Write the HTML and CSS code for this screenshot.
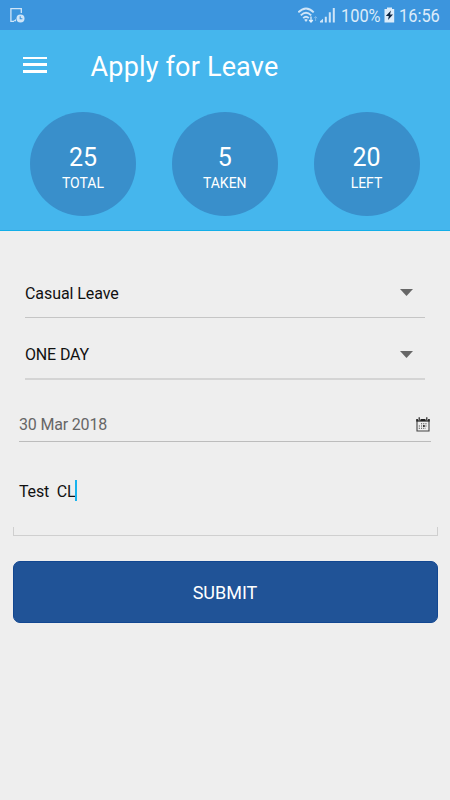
FILE: index.html
```html
<!DOCTYPE html>
<html lang="en">
<head>
<meta charset="utf-8">
<title>Apply for Leave</title>
<link rel="stylesheet" href="styles.css">
</head>
<body>
<div class="status">
  <svg class="notice" width="16" height="16" viewBox="0 0 16 16"><path d="M5 14.3H1.9V1.6H12.3V6" fill="none" stroke="#cfe5f8" stroke-width="1.3"/><circle cx="11.5" cy="11.6" r="4" fill="#cfe5f8"/><path d="M11.2 9.2v2.6h2.2" fill="none" stroke="#3c95dd" stroke-width="1.1"/><path d="M4 14.3 7 12V14.3z" fill="#cfe5f8"/></svg>
  <svg class="wifi" width="20" height="17" viewBox="0 0 20 17"><g fill="none" stroke="#cfe5f8" stroke-width="1.9"><path d="M.3 5.3Q8-2.4 15.7 5.3"/><path d="M2.8 8.4Q8 3.2 13.2 8.4"/><path d="M5.2 11.2Q8 8.4 10.8 11.2"/></g><path d="m8 14.9-1.8-2.2q1.8-1.4 3.6 0z" fill="#cfe5f8"/><path d="M13 9.5v5M11.2 13l1.8 2 1.8-2" fill="none" stroke="#e4f1fc" stroke-width="1.3"/><path d="M17.6 14V9.7m-1.5 1.5 1.5-1.7 1.5 1.7" fill="none" stroke="#7db9ea"/></svg>
  <svg class="signal" width="16" height="16" viewBox="0 0 16 16"><path d="M0 15.5V14.3L3 11.8v3.7zM4.8 9.8h2v5.7h-2zM8.8 5.3h2v10.2h-2zM12.8.9h2v14.6h-2z" fill="#cfe5f8"/></svg>
  <span class="percent"><span class="narrow">100%</span></span>
  <svg class="battery" width="11" height="16" viewBox="0 0 11 16"><path d="M3 .5h5v1.5h2.2v13.5H.5V2H3z" fill="#dcecfa"/><path d="M7 3.5 1.8 9h3L4 13 9 7.4H6z" fill="#102845"/></svg>
  <span class="clock"><span class="narrow">16:56</span></span>
</div>
<header class="header">
  <div class="bar">
    <div class="menu"><i></i><i></i><i></i></div>
    <h1>Apply for Leave</h1>
  </div>
  <div class="stats">
    <div class="stat"><b>25</b><span>TOTAL</span></div>
    <div class="stat"><b>5</b><span>TAKEN</span></div>
    <div class="stat"><b>20</b><span>LEFT</span></div>
  </div>
</header>
<main class="form">
  <div class="select"><span>Casual Leave</span><i class="arrow"></i></div>
  <div class="select second"><span>ONE DAY</span><i class="arrow"></i></div>
  <div class="date"><span>30 Mar 2018</span>
    <svg width="14" height="15" viewBox="0 0 14 15"><path d="M1 3h12v11H1z" fill="#eee" stroke="#444" stroke-width="1.1"/><path d="M.3 2h13.4v2.6H.3z" fill="#222"/><path d="M3.2 0v3.2M10.8 0v3.2" stroke="#eee" stroke-width="2.6"/><path d="M3.2 .2v2.8M10.8 .2v2.8" stroke="#222" stroke-width="1.2"/><path d="M5 6.8h6.5M2.8 9h8.7M2.8 11.2h7" stroke="#444" stroke-width="1.1" stroke-dasharray="1.1 1.1"/><path d="M7 8.2h1.8v1.6H7z" fill="#111"/></svg>
  </div>
  <div class="reason"><span>Test&nbsp; CL</span><i class="caret"></i></div>
  <button class="submit">SUBMIT</button>
</main>
</body>
</html>
```
FILE: styles.css
```css
* { box-sizing: border-box; }
body { margin: 0; width: 450px; height: 800px; overflow: hidden; background: #eee; font-family: Roboto, sans-serif; color: #111; }
svg { display: block; flex: none; }
.status { height: 30px; background: #3c95dd; display: flex; align-items: flex-start; color: #dcecfa; font-size: 18px; line-height: 30px; }
.notice { margin: 7px 0 0 9px; }
.wifi { margin: 7px 0 0 273px; }
.signal { margin: 7px 0 0 2px; }
.percent { width: 40px; margin-left: 5px; padding-top: 1px; }
.clock { width: 44px; margin-left: 4px; padding-top: 1px; }
.narrow { display: inline-block; transform: scaleX(.91); transform-origin: left; }
.battery { margin: 7px 0 0 3px; }
.header { height: 201px; background: #45b6ed; border-bottom: 1px solid #12aee8; color: #fff; }
.bar { height: 82px; display: flex; padding-left: 23px; }
.menu { width: 24px; padding-top: 26.5px; display: flex; flex-direction: column; gap: 4px; }
.menu i { height: 2.7px; background: #fff; }
h1 { margin: 18px 0 0 43.5px; font-size: 27px; font-weight: 400; line-height: 38px; letter-spacing: .18px; white-space: nowrap; }
.stats { display: flex; justify-content: space-between; padding: 0 30.5px 0 30px; }
.stat { width: 106px; height: 104px; border-radius: 50%; background: #398fcb; display: flex; flex-direction: column; align-items: center; padding-top: 32px; }
.stat b { font-size: 25px; font-weight: 400; line-height: 28px; }
.stat span { font-size: 14px; line-height: 16px; margin-top: 3px; }
.form { padding: 39px 12.5px 0; font-size: 16px; }
.select { margin: 0 12.5px; width: 400px; height: 48px; border-bottom: 1px solid #c5c5c5; display: flex; justify-content: space-between; line-height: 48px; letter-spacing: -.07px; padding-right: 12px; }
.select.second { height: 49px; margin-top: 13px; border-bottom: 2px solid #d4d4d4; }
.second span { letter-spacing: -.15px; }
.arrow { width: 13px; height: 7px; margin-top: 19px; background: #676767; clip-path: polygon(0 0, 100% 0, 50% 100%); }
.second .arrow { margin-top: 20px; }
.date { margin: 28px 0 0 6.5px; width: 412px; height: 34px; border-bottom: 1px solid #bcbcbc; display: flex; justify-content: space-between; color: #666; line-height: 34px; letter-spacing: -.18px; padding-right: 1px; }
.date svg { margin-top: 9px; }
.reason { height: 94px; padding: 37px 0 0 6.5px; display: flex; line-height: 26px; letter-spacing: -.15px; background: linear-gradient(#cfcfcf, #cfcfcf) 0 100% / 1px 8px no-repeat, linear-gradient(#cfcfcf, #cfcfcf) 100% 100% / 1px 8px no-repeat; border-bottom: 1px solid #cfcfcf; }
.caret { width: 2px; height: 21px; margin-top: 1px; margin-left: -.5px; background: #18b3ed; }
.submit { display: block; width: 425px; height: 62px; margin-top: 25px; padding: 1px 0 0; border: 1px solid #124791; border-radius: 7px; background: #205397; color: #fff; font: 18px Roboto, sans-serif; }
```
